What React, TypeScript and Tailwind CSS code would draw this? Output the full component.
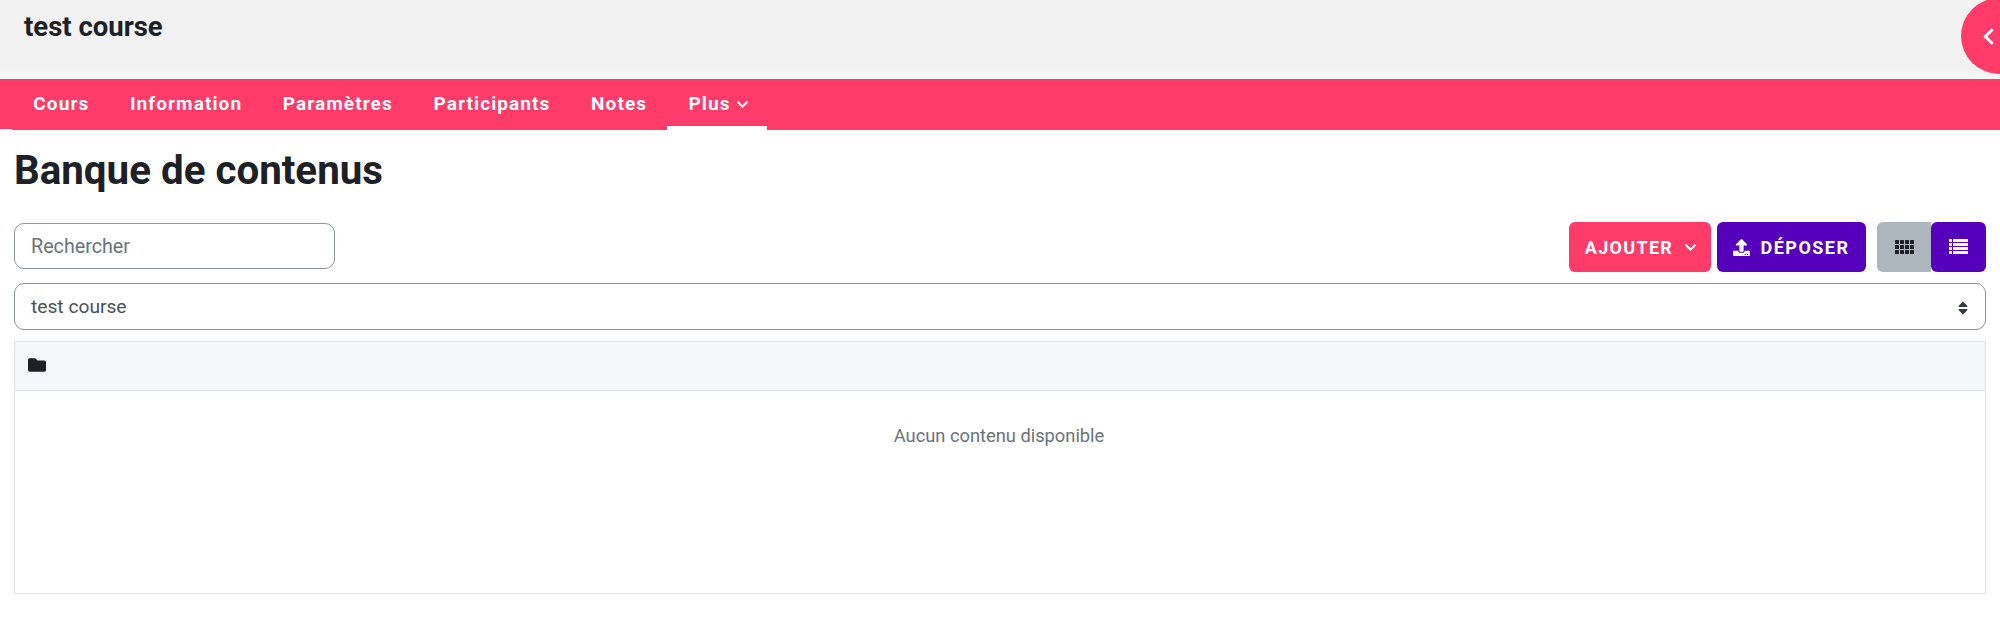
import React from 'react';
import { FaChevronDown, FaChevronLeft, FaFolder, FaSort, FaUpload } from 'react-icons/fa';

const navItems = ['Cours', 'Information', 'Paramètres', 'Participants', 'Notes'];

const GridIcon: React.FC = () => (
  <svg width="19" height="15" viewBox="0 0 19 15" fill="currentColor">
    {[0, 5, 10].map((y) =>
      [0, 5, 10, 15].map((x) => <rect key={`${x}-${y}`} x={x} y={y} width="4" height="4" rx="0.5" />),
    )}
  </svg>
);

const ListIcon: React.FC = () => (
  <svg width="19" height="16" viewBox="0 0 19 16" fill="currentColor">
    {[0, 4, 8, 12].map((y) => (
      <g key={y}>
        <rect x="0" y={y} width="3" height="3" />
        <rect x="4" y={y} width="15" height="3" />
      </g>
    ))}
  </svg>
);

const App: React.FC = () => {
  return (
    <div className="relative h-[630px] overflow-hidden bg-white font-['Roboto',sans-serif] text-[#1d2125]">
      <header className="h-[79px] bg-[#f4f5f5]">
        <div className="h-[70px] bg-[#f2f2f2] pl-6 pt-[11px]">
          <h1 className="text-[27.5px] leading-[32px] font-bold">test course</h1>
        </div>
      </header>

      <button className="absolute -right-[37px] -top-[2px] flex h-[76px] w-[76px] items-center rounded-full bg-[#ff3b69] pl-[18px] text-white">
        <FaChevronLeft className="text-[19px]" />
      </button>

      <nav className="h-[50px] bg-[#ff3b69] text-[19px] font-bold tracking-[1.1px] text-white">
        <div className="ml-3 flex h-[51px] bg-[#ff3b69] pl-px">
          {navItems.map((item) => (
            <a key={item} className="flex items-center px-[20.3px] pb-px">
              {item}
            </a>
          ))}
          <a className="flex w-[100px] items-center gap-[5px] border-b-[4px] border-white pl-[21px] pt-[3px]">
            Plus
            <FaChevronDown className="text-[13px]" />
          </a>
        </div>
      </nav>

      <main className="px-[14px]">
        <h2 className="mt-[19px] text-[40.3px] leading-[46px] font-bold">Banque de contenus</h2>

        <div className="mt-[28px] flex items-start justify-between">
          <input
            placeholder="Rechercher"
            className="mt-px h-[46px] w-[321px] rounded-[10px] border border-[#8f959e] px-4 text-[19.7px] placeholder:text-[#6a737b]"
          />
          <div className="flex">
            <button className="flex h-[50px] w-[142px] items-center justify-center gap-[11px] rounded-md bg-[#ff3b69] pl-[2px] text-[18px] font-bold tracking-[1.3px] text-white">
              AJOUTER
              <FaChevronDown className="text-[13px]" />
            </button>
            <button className="ml-[6px] flex h-[50px] w-[149px] items-center justify-center gap-[10px] rounded-md bg-[#5500bb] text-[18px] font-bold tracking-[1.5px] text-white">
              <FaUpload className="text-[17px]" />
              DÉPOSER
            </button>
            <button className="ml-[11px] flex h-[50px] w-[54px] items-center justify-center rounded-l-md bg-[#adb5bd] text-[#1d2125]">
              <GridIcon />
            </button>
            <button className="flex h-[50px] w-[55px] items-center justify-center rounded-md bg-[#5500bb] text-white">
              <ListIcon />
            </button>
          </div>
        </div>

        <div className="mt-[11px] flex h-[47px] items-center justify-between rounded-[10px] border border-[#8f959e] pr-[14px] pl-4 pt-[2px] text-[19.2px] text-[#495057]">
          test course
          <FaSort className="text-[16px] text-[#343a40]" />
        </div>

        <section className="mt-[11px] h-[253px] border border-[#dee2e6]">
          <div className="flex h-[49px] items-center border-b border-[#dee2e6] bg-[#f5f8fb] pb-[2px] pl-[13px]">
            <FaFolder className="text-[18px] text-[#1d2125]" />
          </div>
          <p className="pt-[32px] pr-[2px] text-center text-[18.3px] leading-[26px] text-[#6a737b]">Aucun contenu disponible</p>
        </section>
      </main>
    </div>
  );
};

export default App;
